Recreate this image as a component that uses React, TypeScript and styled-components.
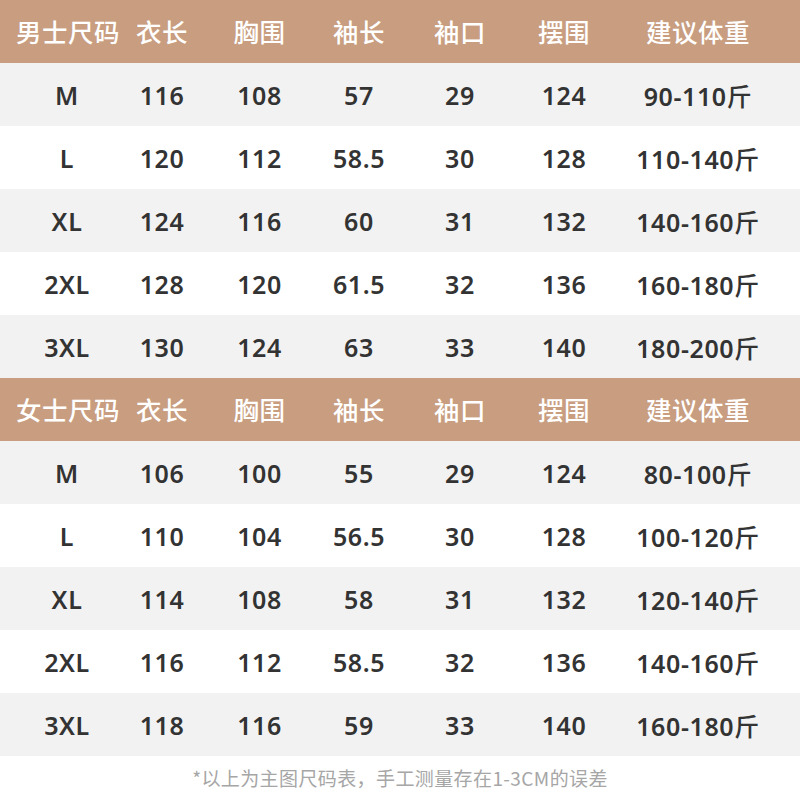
import React from "react";
import styled, { createGlobalStyle } from "styled-components";

const Global = createGlobalStyle`
  html, body { margin: 0; padding: 0; background: #ffffff; }
  body { font-family: "Noto Sans CJK SC", "Noto Sans", sans-serif; }
`;

const Page = styled.div`
  width: 800px;
  height: 800px;
  display: flex;
  flex-direction: column;
  background: #ffffff;
  overflow: hidden;
`;

const cols = "114px 96px 99px 100px 102px 106px 183px";

const HeaderRow = styled.div`
  display: grid;
  grid-template-columns: ${cols};
  height: 63px;
  background: #c89d80;
  align-items: center;
`;

const Row = styled.div<{ $alt: boolean }>`
  display: grid;
  grid-template-columns: ${cols};
  height: 63px;
  background: ${(p) => (p.$alt ? "#f2f2f2" : "#ffffff")};
  align-items: center;
`;

const Cell = styled.div<{ $first?: boolean; $last?: boolean }>`
  text-align: center;
  white-space: nowrap;
  padding-left: ${(p) => (p.$first ? "20px" : "0")};
  padding-right: ${(p) => (p.$last ? "21px" : "0")};
`;

const HeadCell = styled(Cell)`
  color: #ffffff;
  font-family: "Noto Sans CJK SC", sans-serif;
  font-size: 25.5px;
  font-weight: 500;
  letter-spacing: 0.5px;
  padding-bottom: 2px;
`;

const TitleCell = styled(HeadCell)`
  padding-left: 16px;
`;

const DataCell = styled(Cell)`
  color: #333333;
  font-family: "Noto Sans", "Noto Sans CJK SC", sans-serif;
  font-size: 25px;
  font-weight: 600;
  letter-spacing: 0.6px;
`;

const Jin = styled.span`
  font-family: "Noto Sans CJK SC", sans-serif;
  font-weight: 500;
`;

const Footer = styled.div`
  flex: 1;
  display: flex;
  align-items: center;
  justify-content: center;
  color: #a6a6a6;
  font-family: "Noto Sans CJK SC", sans-serif;
  font-size: 19px;
  letter-spacing: 0.4px;
  padding-bottom: 2px;
`;

const headers = ["衣长", "胸围", "袖长", "袖口", "摆围", "建议体重"];

const men = [
  ["M", "116", "108", "57", "29", "124", "90-110"],
  ["L", "120", "112", "58.5", "30", "128", "110-140"],
  ["XL", "124", "116", "60", "31", "132", "140-160"],
  ["2XL", "128", "120", "61.5", "32", "136", "160-180"],
  ["3XL", "130", "124", "63", "33", "140", "180-200"],
];

const women = [
  ["M", "106", "100", "55", "29", "124", "80-100"],
  ["L", "110", "104", "56.5", "30", "128", "100-120"],
  ["XL", "114", "108", "58", "31", "132", "120-140"],
  ["2XL", "116", "112", "58.5", "32", "136", "140-160"],
  ["3XL", "118", "116", "59", "33", "140", "160-180"],
];

function Section({ title, rows }: { title: string; rows: string[][] }) {
  return (
    <>
      <HeaderRow>
        <TitleCell>{title}</TitleCell>
        {headers.map((h, i) => (
          <HeadCell key={h} $last={i === headers.length - 1}>
            {h}
          </HeadCell>
        ))}
      </HeaderRow>
      {rows.map((r, ri) => (
        <Row key={ri} $alt={ri % 2 === 0}>
          {r.map((v, ci) => (
            <DataCell key={ci} $first={ci === 0} $last={ci === r.length - 1}>
              {v}
              {ci === r.length - 1 && <Jin>斤</Jin>}
            </DataCell>
          ))}
        </Row>
      ))}
    </>
  );
}

export default function App() {
  return (
    <>
      <Global />
      <Page>
        <Section title="男士尺码" rows={men} />
        <Section title="女士尺码" rows={women} />
        <Footer>*以上为主图尺码表，手工测量存在1-3CM的误差</Footer>
      </Page>
    </>
  );
}
